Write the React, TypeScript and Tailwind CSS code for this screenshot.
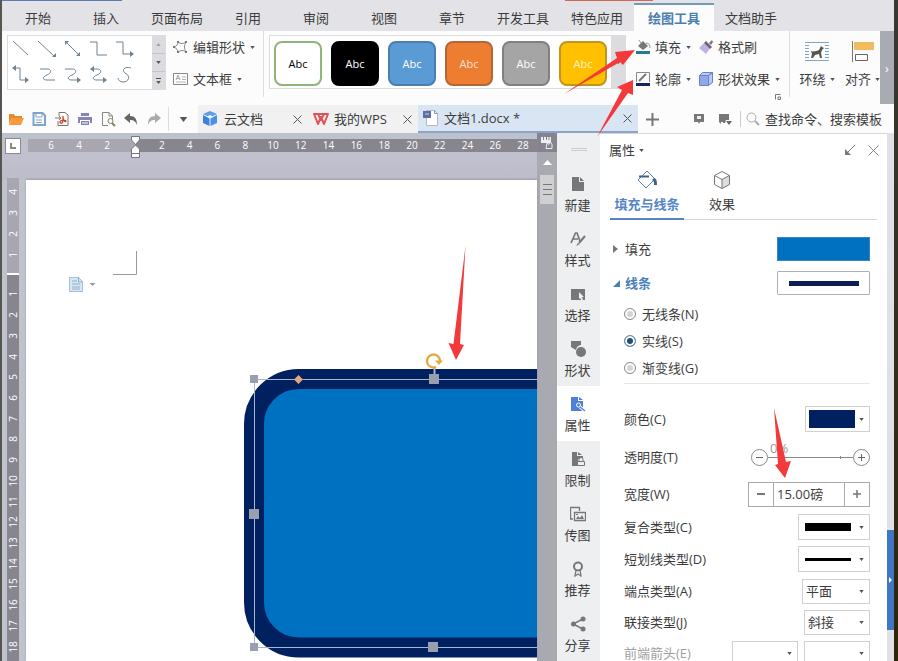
import clsx from "clsx";
import { useState } from "react";
import type { ReactNode } from "react";

const MENU = [
	"开始",
	"插入",
	"页面布局",
	"引用",
	"审阅",
	"视图",
	"章节",
	"开发工具",
	"特色应用",
	"绘图工具",
	"文档助手",
];

const SHAPE_STYLES = [
	{ id: "outline", className: "border-[#8fb57a] bg-white text-black" },
	{ id: "black", className: "border-black bg-black text-white" },
	{ id: "blue", className: "border-[#4a7db0] bg-[#5b9bd5] text-white" },
	{ id: "orange", className: "border-[#b5653a] bg-[#ed7d31] text-[#fbe3d3]" },
	{ id: "gray", className: "border-[#808080] bg-[#a5a5a5] text-white" },
	{ id: "gold", className: "border-[#bf9420] bg-[#ffc000] text-[#fff0c0]" },
];

const LINE_TYPES = ["无线条(N)", "实线(S)", "渐变线(G)"];

function Caret({ className }: { className?: string }) {
	return (
		<svg
			viewBox="0 0 6 4"
			className={clsx("h-[3px] w-[5px] shrink-0 fill-[#555]", className)}
		>
			<path d="M0 0h6L3 4z" />
		</svg>
	);
}

function Icon({
	children,
	className = "size-4",
	box = "0 0 16 16",
}: {
	children: ReactNode;
	className?: string;
	box?: string;
}) {
	return (
		<svg viewBox={box} fill="none" className={clsx("shrink-0", className)}>
			{children}
		</svg>
	);
}

function MenuBar() {
	const [active, setActive] = useState("绘图工具");

	return (
		<nav className="relative flex h-[31px] shrink-0 bg-[#e3e3e7] pl-0.5">
			<div className="absolute top-0 left-0 h-px w-[120px] bg-[#5b7fb5]" />
			<div className="absolute top-0 left-[563px] h-px w-[88px] bg-[#cf6a58]" />
			{MENU.map((item) => (
				<button
					key={item}
					type="button"
					onClick={() => setActive(item)}
					className={clsx(
						"shrink-0 text-center",
						item === active
							? "mt-[3px] w-20 border-t-2 border-[#6f9bb8] bg-[#fcfcfc] font-bold text-[#4a80b0]"
							: "mt-[5px]",
						item !== active && (item.length > 2 ? "w-[74px]" : "w-[68px]"),
					)}
				>
					{item}
				</button>
			))}
		</nav>
	);
}

function LineGallery() {
	return (
		<div className="flex h-[55px] w-[159px] shrink-0 border border-[#dcdcde] bg-white">
			<svg
				viewBox="8 36 144 53"
				className="h-[53px] w-36 shrink-0"
				fill="none"
				stroke="#6f8291"
			>
				<path d="M13 41 28 55" />
				<path d="M38 41 54 56" />
				<path d="M66 42 79 55" />
				<path d="M90 42h7v13h10" />
				<path d="M116 42h7v12h9" />
				<path d="M14 68h6v12h8" />
				<path d="M40 69h7c5 0 5 4 0 6s-5 5 0 5h8" />
				<path d="M65 69h7c5 0 5 4 0 6s-5 5 0 5h8" />
				<path d="M92 69h5c5 0 5 4 0 6s-5 5 0 5h9" />
				<path d="M131 68c-6-2-10 2-6 5 6 3 4 9-2 9-3 0-5-2-5-4" />
				<path
					d="M56 57v-4l-4 4zM65 41v4l4-4zM80 56v-4l-4 4zM134 54l-4-3v6zM12 68l4-3v6zM29 80l-4-3v6zM81 80l-4-3v6zM90 69l4-3v6zM107 80l-4-3v6z"
					fill="#6f8291"
					stroke="none"
				/>
			</svg>
			<div className="flex flex-1 flex-col bg-[#dcdce0]">
				<button
					type="button"
					aria-label="向上"
					className="flex flex-1 items-center justify-center border-b border-[#c5c5c9]"
				>
					<Caret className="rotate-180 opacity-40" />
				</button>
				<button
					type="button"
					aria-label="向下"
					className="flex flex-1 items-center justify-center border-b border-[#c5c5c9]"
				>
					<Caret />
				</button>
				<button
					type="button"
					aria-label="更多"
					className="flex flex-1 flex-col items-center justify-center gap-0.5"
				>
					<span className="h-px w-[5px] bg-[#555]" />
					<Caret />
				</button>
			</div>
		</div>
	);
}

function RibbonButton({
	icon,
	label,
	caret = true,
}: {
	icon: ReactNode;
	label: string;
	caret?: boolean;
}) {
	return (
		<button
			type="button"
			className="flex h-8 items-center gap-1 whitespace-nowrap"
		>
			{icon}
			{label}
			{caret && <Caret className="ml-px" />}
		</button>
	);
}

function Ribbon() {
	return (
		<div className="flex h-[73px] shrink-0 bg-[#fcfcfc]">
			<div className="flex min-w-0 flex-1 overflow-hidden pl-[5px]">
				<div className="pt-1">
					<LineGallery />
				</div>
				<div className="ml-[7px] flex w-[90px] shrink-0 flex-col">
					<RibbonButton
						label="编辑形状"
						icon={
							<Icon>
								<path
									d="M5 3c3 2 5 2 8 0-2 4-2 6 0 10-3-2-5-2-8 0 0-2-1-3-4-5 3-1 4-3 4-5z"
									stroke="#888"
								/>
								<path
									d="M4 2h2v2H4zM12 2h2v2h-2zM12 12h2v2h-2zM4 12h2v2H4zM0 7h2v2H0z"
									fill="#777"
								/>
							</Icon>
						}
					/>
					<RibbonButton
						label="文本框"
						icon={
							<Icon>
								<path d="M.5 2.500h14v11H.5z" stroke="#888" />
								<path d="m3 9 2-5 2 5M4 7.500h2" stroke="#a0a8b0" />
								<path d="M9 6h4M9 8.500h4M3 11h10" stroke="#b0b4b8" />
							</Icon>
						}
					/>
				</div>
				<div className="mr-[5px] h-[66px] w-px shrink-0 bg-[#dedee0]" />
				<div className="mt-1 flex h-[54px] shrink-0 border border-[#dcdcde]">
					<div className="flex gap-[9px] bg-white px-1 py-[5px]">
						{SHAPE_STYLES.map((style) => (
							<button
								key={style.id}
								type="button"
								className={clsx(
									"h-[45px] w-12 shrink-0 rounded-lg border-2 text-[11px]",
									style.className,
								)}
							>
								Abc
							</button>
						))}
					</div>
					<div className="flex w-[14px] items-center justify-center bg-[#dcdce0]">
						<Caret />
					</div>
				</div>
				<div className="ml-[9px] flex w-[63px] shrink-0 flex-col">
					<RibbonButton
						label="填充"
						icon={
							<Icon>
								<path d="M3 7 8 2l5 5-5 4z" fill="#777" />
								<path d="M6 4 4 1M11 4c3 0 4 2 4 5" stroke="#999" />
								<path d="M1 12h14v3H1z" fill="#217c94" />
							</Icon>
						}
					/>
					<RibbonButton
						label="轮廓"
						icon={
							<Icon>
								<path d="M1.500 11V1.500h13V11" stroke="#888" />
								<path d="m4 10 7-7" stroke="#777" strokeWidth="2" />
								<path d="M1 12h14v3H1z" fill="#14265c" />
							</Icon>
						}
					/>
				</div>
				<div className="relative flex w-[91px] shrink-0 flex-col">
					<RibbonButton
						label="格式刷"
						caret={false}
						icon={
							<Icon>
								<path d="m1 9 5-5 6 5-4 6z" fill="#c3b0e2" />
								<path d="m6 4 2-2 6 6-2 2z" fill="#6b6575" />
								<path d="m11 4 3-3 1 2-2 3z" fill="#777" />
							</Icon>
						}
					/>
					<RibbonButton
						label="形状效果"
						icon={
							<Icon>
								<path d="M1.500 4.500h9v10h-9z" fill="#8fa9e8" stroke="#6a82c4" />
								<path
									d="m1.500 4.500 3-3h10l-4 3zM10.500 4.500l4-3v10l-4 3z"
									fill="#b9c9f4"
									stroke="#6a82c4"
								/>
							</Icon>
						}
					/>
					<Icon className="absolute right-2 bottom-1 size-[6px]" box="0 0 6 6">
						<path d="M.5 5.500V.5h5M3 3h2.500v2.500H3z" stroke="#777" />
					</Icon>
				</div>
				<div className="mr-[9px] h-[66px] w-px shrink-0 bg-[#dedee0]" />
				<button
					type="button"
					className="flex w-9 shrink-0 flex-col items-center pt-2"
				>
					<Icon className="h-6 w-6" box="0 0 24 24">
						<path
							d="M0 3.500h24M0 6.500h4M20 6.500h4M0 9.500h4M20 9.500h4M0 12.500h4M20 12.500h4M0 15.500h4M20 15.500h4M0 18.500h4M20 18.500h4M0 21.500h24"
							stroke="#7fa6c4"
						/>
						<path
							d="M6 12c3 1 6 0 8-1l2-4 1 1 2 1-2 2-1 3 1 5h-2l-1-4-4 1-2 3H6l1-4z"
							fill="#555"
						/>
					</Icon>
					<span className="mt-1.5 flex items-center gap-1 whitespace-nowrap">
						环绕
						<Caret />
					</span>
				</button>
				<button
					type="button"
					className="ml-[10px] flex shrink-0 flex-col items-center pt-2"
				>
					<Icon className="h-6 w-6" box="0 0 24 24">
						<path d="M1.500 2v21" stroke="#777" />
						<path d="M3 3h20v8H3z" fill="#f2bb62" />
						<path d="M4.500 15.500h12v6h-12z" stroke="#666" />
					</Icon>
					<span className="mt-1.5 flex items-center gap-1 whitespace-nowrap">
						对齐
						<Caret />
					</span>
				</button>
			</div>
			<button
				type="button"
				aria-label="展开"
				className="w-[14px] shrink-0 bg-[#a9abb3] text-white"
			>
				›
			</button>
		</div>
	);
}

function CloseMark({ className = "size-[9px]" }: { className?: string }) {
	return (
		<Icon className={className} box="0 0 9 9">
			<path d="m.5.5 8 8m0-8-8 8" stroke="#555" />
		</Icon>
	);
}

function QuickAccess() {
	return (
		<div className="flex w-[196px] shrink-0 items-center pl-[6px]">
			<div className="flex items-center gap-[7px]">
				<button type="button" aria-label="打开">
					<Icon>
						<path d="M1 13V3h5l1 2h7v2H4z" fill="#e48a2e" />
						<path d="m1 14 3-7h12l-3 7z" fill="#f79a3b" />
					</Icon>
				</button>
				<button type="button" aria-label="保存">
					<Icon>
						<path
							d="M2.500 2h9L14 4.500V14H2.500z"
							stroke="#7fa3cc"
							strokeWidth="2"
						/>
						<path d="M5 3v3h6V3M5 9h6M5 11.500h6" stroke="#7fa3cc" />
					</Icon>
				</button>
				<button type="button" aria-label="输出为PDF">
					<Icon>
						<path d="M5 5V1.500h6L14 4v10.500H4V10" stroke="#80736b" />
						<path d="M1 7h6M5 5l2 2-2 2" stroke="#80736b" />
						<path
							d="M9 5v4c0 4-3 4-3 2s6-2 6-1-3 1-3-4"
							stroke="#c4472f"
							strokeWidth="1.300"
						/>
					</Icon>
				</button>
				<button type="button" aria-label="打印">
					<Icon>
						<path d="M4 2h8v3H4zM1 6h14v6h-2V9H3v3H1z" fill="#8684b5" />
						<path d="M4 10h8v4H4z" fill="#8684b5" />
						<path d="M5 12h6" stroke="#fff" />
					</Icon>
				</button>
				<button type="button" aria-label="打印预览">
					<Icon>
						<path
							d="M8 14.500H2.500v-13H9L12.500 5v3M9 1.500V5h3"
							stroke="#888"
						/>
						<circle cx="10.500" cy="10" r="2.500" stroke="#8a8060" />
						<path d="m12 12 3 3" stroke="#8a8060" strokeWidth="2" />
					</Icon>
				</button>
				<button type="button" aria-label="撤销">
					<Icon>
						<path d="m1 7 6-5v3c5 0 7 3 7 9-1-3-3-5-7-5v3z" fill="#666" />
					</Icon>
				</button>
				<button type="button" aria-label="恢复">
					<Icon>
						<path d="M15 7 9 2v3c-5 0-7 3-7 9 1-3 3-5 7-5v3z" fill="#aaa" />
					</Icon>
				</button>
			</div>
			<div className="mr-[10px] ml-[6px] h-6 w-px bg-[#ddd]" />
			<Caret className="h-[5px] w-[9px]" />
		</div>
	);
}

function TabBar() {
	const [query, setQuery] = useState("");

	return (
		<div className="flex h-[29px] shrink-0 bg-[#fcfcfc] pt-px">
			<QuickAccess />
			<div className="flex w-[110px] shrink-0 items-center bg-[#f1f1f2] pr-[6px] pl-1">
				<Icon>
					<path d="m8 0 7 3-7 3.500L1 3z" fill="#5b9cec" />
					<path d="m1 4 6.500 3.500V15L1 12z" fill="#3c82dc" />
					<path d="M15 4 8.500 7.500V15L15 12z" fill="#4a8fe6" />
					<path d="m8 4 3 1.500L8 7 5 5.500z" fill="#fff" />
				</Icon>
				<span className="ml-1.5 flex-1">云文档</span>
				<CloseMark />
			</div>
			<div className="flex w-[110px] shrink-0 items-center bg-[#f1f1f2] pr-[6px] pl-1">
				<Icon className="h-4 w-[18px]" box="0 0 18 16">
					<path
						d="M2 3h14l-4 10-3-7-3 7zM6 3l3 6 3-6"
						stroke="#e05257"
						strokeWidth="2"
						strokeLinejoin="round"
					/>
				</Icon>
				<span className="ml-1 flex-1">我的WPS</span>
				<CloseMark />
			</div>
			<div className="flex min-w-[150px] flex-1 items-center border-b-2 border-[#8aa4cb] bg-[#dae5f4] pr-[6px] pl-[5px]">
				<Icon className="h-[18px] w-4" box="0 0 16 18">
					<path d="M3.500 1.500h8l3 3v12h-11z" fill="#fff" stroke="#b3b9c6" />
					<path d="M11.500 1.500v3h3" stroke="#8793ad" />
					<path d="M0 2h8v7H0z" fill="#5e6fa8" />
					<path d="M2 5h4" stroke="#c4cce6" />
				</Icon>
				<span className="ml-[5px] flex-1">文档1.docx *</span>
				<CloseMark />
			</div>
			<div className="flex w-[256px] shrink-0 items-center pl-2">
				<button type="button" aria-label="新建标签">
					<Icon className="size-[13px]" box="0 0 13 13">
						<path d="M6.500 0v13M0 6.500h13" stroke="#777" strokeWidth="2" />
					</Icon>
				</button>
				<Icon className="ml-[34px] size-3" box="0 0 12 12">
					<path d="M1 1h10v8H7l-1 2-1-2H1z" fill="#777" />
					<path d="M4 3h4v3H4z" fill="#eee" />
				</Icon>
				<Icon className="ml-[13px] h-3 w-[14px]" box="0 0 14 12">
					<path d="M1 1h10v6H8l-1 3H5V9H3v2L1 9z" fill="#777" />
					<path d="M8 8h6l-3 4z" fill="#666" />
				</Icon>
				<div className="mr-[5px] ml-2 h-4 w-px bg-[#ccc]" />
				<Icon className="size-[14px]" box="0 0 14 14">
					<circle cx="5.500" cy="5.500" r="4.500" stroke="#aaa" />
					<path d="m9 9 4 4" stroke="#aaa" strokeWidth="2" />
				</Icon>
				<input
					type="text"
					aria-label="查找"
					value={query}
					onChange={(e) => setQuery(e.target.value)}
					placeholder="查找命令、搜索模板"
					className="ml-[5px] w-[122px] bg-transparent outline-none placeholder:text-[#3c3c3c]"
				/>
			</div>
		</div>
	);
}

function HorizontalRuler() {
	return (
		<div className="flex h-[47px] shrink-0 bg-gradient-to-b from-[#bcc2ca] via-[#c1c0ce] to-[#bdbdca] pl-[3px]">
			<div className="mt-[5px] flex size-4 shrink-0 items-center justify-center border border-[#8a8a94] bg-white">
				<div className="size-[6px] border-b-2 border-l-2 border-[#888]" />
			</div>
			<div className="relative mt-[6px] ml-[7px] flex h-[13px] flex-1 text-center text-[10px] leading-[13px] text-white">
				<div className="flex w-[107px] shrink-0 bg-[#a7a6b1] pl-[9px]">
					{[6, 4, 2].map((n) => (
						<span key={n} className="w-7">
							{n}
						</span>
					))}
				</div>
				<div className="flex flex-1 bg-[#87868f] pl-[13px]">
					{Array.from({ length: 14 }, (_, i) => (
						<span key={i} className="flex-1">
							{i * 2 + 2}
						</span>
					))}
				</div>
				<Icon
					className="absolute -top-[3px] left-[103px] h-[22px] w-[9px]"
					box="0 0 9 22"
				>
					<path
						d="M.5.500h8V4l-4 4.500L.5 4zM.5 21.500V13l4-4 4 4v8.500zM.5 17.500h8"
						fill="#fff"
						stroke="#77767f"
					/>
				</Icon>
			</div>
		</div>
	);
}

function VerticalRuler() {
	return (
		<div className="flex w-6 shrink-0 flex-col bg-[#bfc4cc] pl-[5px]">
			<div className="-mt-0.5 flex w-3 flex-1 flex-col items-center overflow-hidden bg-[#87868f] text-[10px] text-white">
				<div className="flex h-[97px] w-full shrink-0 flex-col border-b-2 border-white bg-[#a7a6b1] pt-[3px] pb-2">
					{[4, 3, 2, 1].map((n) => (
						<div key={n} className="flex flex-1 items-center justify-center">
							<span className="-rotate-90 leading-3">{n}</span>
						</div>
					))}
				</div>
				<div className="mt-[9px] flex h-[373px] w-full shrink-0 flex-col">
					{Array.from({ length: 18 }, (_, i) => (
						<div key={i} className="flex flex-1 items-center justify-center">
							<span className="-rotate-90 leading-3">{i + 1}</span>
						</div>
					))}
				</div>
			</div>
		</div>
	);
}

function Page() {
	return (
		<div className="relative min-w-0 flex-1 overflow-hidden bg-white shadow-[0_-1px_2px_#9a9aa5]">
			<svg
				viewBox="26 180 511 481"
				className="block h-[481px] w-[511px]"
				fill="none"
			>
				<path d="M136.500 251v23.500H113" stroke="#999" />
				<path d="M69.500 277.500h9l4 4v10h-13z" fill="#d8e5f2" stroke="#a6c0da" />
				<path
					d="M72 281h5M72 284h8M72 287h8M72 289h8M78.500 277v5h4"
					stroke="#8fb0d0"
				/>
				<path d="M89.500 283h6l-3 3z" fill="#999" />
				<rect
					x="254"
					y="379"
					width="360"
					height="268.500"
					rx="45"
					fill="#0070c0"
					stroke="#002060"
					strokeWidth="20"
				/>
				<path d="M540 379.500H254.500v268H540" stroke="#a9b6cf" />
				<path d="M434.500 368v7" stroke="#a9b6cf" strokeWidth="2" />
				<path
					d="M250 375h8v8h-8zM429 374h10v10h-10zM249 509h10v10h-10zM250 643h8v8h-8zM428 642h10v10h-10z"
					fill="#999fae"
				/>
				<path d="m298.500 375 4.500 4.500-4.500 4.500-4.500-4.500z" fill="#e5a57e" />
				<path
					d="M436 367a6.500 6.500 0 1 1 4-6"
					stroke="#e6a93c"
					strokeWidth="2.300"
				/>
				<path d="M435 360.500h8l-4 4.500z" fill="#e6a93c" />
			</svg>
		</div>
	);
}

function ScrollBar() {
	return (
		<div className="flex w-5 shrink-0 flex-col items-center bg-[#a9a9b2]">
			<div className="flex h-[19px] w-full items-center justify-center bg-[#85848e]">
				<Icon className="size-3" box="0 0 12 12">
					<path d="M0 0h10v6H0z" fill="#eee" />
					<path d="M2.500 0v3M5.500 0v3M8 0v3" stroke="#85848e" />
					<path
						d="M5 11.500h6v-4L9.500 5 8 7.500 6 6z"
						fill="#85848e"
						stroke="#eee"
					/>
				</Icon>
			</div>
			<Icon className="mt-2 h-[5px] w-[9px]" box="0 0 9 5">
				<path d="M4.500 0 9 5H0z" fill="#fff" />
			</Icon>
			<div className="mt-[10px] flex h-[29px] w-[14px] flex-col items-center justify-center gap-1 bg-[#d0d0d3]">
				<span className="h-px w-[9px] bg-[#777]" />
				<span className="h-px w-[9px] bg-[#777]" />
				<span className="h-px w-[9px] bg-[#777]" />
			</div>
		</div>
	);
}

const SIDE_ITEMS: { label: string; icon: ReactNode }[] = [
	{
		label: "新建",
		icon: (
			<>
				<path d="M2 1h7v5h5v9H2z" fill="currentColor" />
				<path d="M10 1v4h4z" fill="currentColor" />
			</>
		),
	},
	{
		label: "样式",
		icon: (
			<>
				<path
					d="M1 12 5.500 2H7l3 8M3 8h5"
					stroke="currentColor"
					strokeWidth="1.700"
				/>
				<path d="m15 5-6 7" stroke="currentColor" strokeWidth="2" />
				<path d="m6 15 2-3 2 1z" fill="currentColor" />
			</>
		),
	},
	{
		label: "选择",
		icon: (
			<>
				<path d="M1 3h14v11H1z" fill="currentColor" />
				<path d="m9 6 5 5h-2l1 3-1 1-2-3-1 1z" fill="#eeeff1" />
			</>
		),
	},
	{
		label: "形状",
		icon: (
			<>
				<path d="M1 0h10v4a6 6 0 0 0-5 5L1 6z" fill="currentColor" />
				<circle cx="11" cy="11" r="5" fill="currentColor" />
			</>
		),
	},
	{
		label: "属性",
		icon: (
			<>
				<path d="M1 1h7v4h5v10H1z" fill="currentColor" />
				<path d="M9 1v3h4z" fill="currentColor" />
				<circle cx="8.500" cy="9" r="2" stroke="#fff" />
				<path d="m10 11 5 4" stroke="#fff" strokeWidth="3" />
				<path d="m10 11 5 4" stroke="currentColor" strokeWidth="1.500" />
			</>
		),
	},
	{
		label: "限制",
		icon: (
			<>
				<path d="M2 1h5v4h6v3H8v7H2z" fill="currentColor" />
				<path d="M8 1v3h4z" fill="currentColor" />
				<path
					d="M7.500 10.500h7v4h-7zM9 10V8.500a2 2 0 0 1 4 0V10"
					fill="#eeeff1"
					stroke="currentColor"
				/>
			</>
		),
	},
	{
		label: "传图",
		icon: (
			<>
				<path
					d="M3 13H.5V1.500h9V5M4.500 6.500h11v8h-11z"
					stroke="currentColor"
					strokeWidth="1.300"
				/>
				<path d="m6 13 2-3 2 2 2-3 2 4zM6 8h2v1H6z" fill="currentColor" />
			</>
		),
	},
	{
		label: "推荐",
		icon: (
			<>
				<circle cx="8" cy="5.500" r="4" stroke="currentColor" strokeWidth="2" />
				<path
					d="m6 9-1 6 3-2 3 2-1-6"
					stroke="currentColor"
					strokeWidth="1.300"
				/>
			</>
		),
	},
	{
		label: "分享",
		icon: (
			<>
				<path d="M13 3 3 8l10 5" stroke="currentColor" strokeWidth="1.500" />
				<circle cx="13" cy="3" r="2.500" fill="currentColor" />
				<circle cx="3.500" cy="8" r="2.500" fill="currentColor" />
				<circle cx="13" cy="13" r="2.500" fill="currentColor" />
			</>
		),
	},
];

function SideBar() {
	const [active, setActive] = useState("属性");

	return (
		<aside className="flex w-[43px] shrink-0 flex-col bg-[#eeeff1]">
			<div className="flex h-[33px] shrink-0 flex-col items-center gap-px pt-[15px]">
				<span className="h-px w-4 bg-[#ccc]" />
				<span className="h-px w-4 bg-[#ccc]" />
			</div>
			{SIDE_ITEMS.map(({ label, icon }) => (
				<button
					key={label}
					type="button"
					onClick={() => setActive(label)}
					className={clsx(
						"flex h-[55px] shrink-0 flex-col items-center gap-[3px] pt-[10px] pr-0.5",
						label === active && "bg-white",
					)}
				>
					<Icon
						className={clsx(
							"size-4",
							label === active ? "text-[#4f80d8]" : "text-[#777]",
						)}
					>
						{icon}
					</Icon>
					{label}
				</button>
			))}
		</aside>
	);
}

function Row({
	label,
	htmlFor,
	className = "h-8",
	children,
}: {
	label: string;
	htmlFor: string;
	className?: string;
	children: ReactNode;
}) {
	return (
		<div className={clsx("flex shrink-0 items-center", className)}>
			<label htmlFor={htmlFor} className="flex-1 whitespace-nowrap">
				{label}
			</label>
			{children}
		</div>
	);
}

function Picker({
	id,
	className,
	children,
}: {
	id: string;
	className: string;
	children: ReactNode;
}) {
	return (
		<button
			id={id}
			type="button"
			aria-haspopup="listbox"
			className={clsx(
				"flex h-[26px] items-center justify-between border border-[#d0d0d3] bg-white pr-[5px]",
				className,
			)}
		>
			{children}
			<Caret />
		</button>
	);
}

function Select({
	id,
	label,
	options,
	className,
}: {
	id: string;
	label?: string;
	options: string[];
	className: string;
}) {
	return (
		<div className={clsx("relative", className)}>
			<select
				id={id}
				aria-label={label}
				className="block h-[25px] w-full appearance-none border border-[#d0d0d3] bg-white pl-[3px]"
			>
				{options.map((option) => (
					<option key={option}>{option}</option>
				))}
			</select>
			<Caret className="pointer-events-none absolute top-[11px] right-[6px]" />
		</div>
	);
}

function LineSettings() {
	const [lineType, setLineType] = useState("实线(S)");
	const [opacity, setOpacity] = useState(0);
	const [width, setWidth] = useState(15);

	return (
		<div className="flex flex-col pr-[17px] pl-6">
			<fieldset className="border-b border-[#e6e6e8] pb-[2px]">
				{LINE_TYPES.map((type) => (
					<label key={type} className="flex h-[27px] items-center gap-[6px]">
						<input
							type="radio"
							name="lineType"
							checked={lineType === type}
							onChange={() => setLineType(type)}
							className="size-3 appearance-none rounded-full border border-[#8e8e92] bg-[#d4d4d8] shadow-[inset_0_0_0_2px_#fff] checked:border-[#6f8fa8] checked:bg-[#1d5078]"
						/>
						{type}
					</label>
				))}
			</fieldset>
			<Row label="颜色(C)" htmlFor="color" className="mt-4 h-[38px]">
				<Picker id="color" className="w-[65px] pl-[3px]">
					<span className="h-[18px] w-[46px] bg-[#002060]" />
				</Picker>
			</Row>
			<Row label="透明度(T)" htmlFor="opacity" className="h-[38px]">
				<div className="flex items-center">
					<button
						type="button"
						aria-label="减少透明度"
						onClick={() => setOpacity(Math.max(0, opacity - 1))}
					>
						<Icon className="size-[17px]" box="0 0 17 17">
							<circle cx="8.500" cy="8.500" r="8" stroke="#888" />
							<path d="M5 8.500h7" stroke="#666" />
						</Icon>
					</button>
					<div className="relative flex w-[85px] items-center">
						<output
							htmlFor="opacity"
							className="absolute bottom-0 left-0.5 text-[#999]"
						>
							{opacity}%
						</output>
						<input
							id="opacity"
							type="range"
							value={opacity}
							onChange={(e) => setOpacity(Number(e.target.value))}
							className="h-px w-full appearance-none bg-[#888] [&::-webkit-slider-thumb]:h-0 [&::-webkit-slider-thumb]:w-0 [&::-webkit-slider-thumb]:appearance-none"
						/>
						<span className="absolute right-3 h-[3px] w-px bg-[#888]" />
					</div>
					<button
						type="button"
						aria-label="增加透明度"
						onClick={() => setOpacity(Math.min(100, opacity + 1))}
					>
						<Icon className="size-[17px]" box="0 0 17 17">
							<circle cx="8.500" cy="8.500" r="8" stroke="#888" />
							<path d="M5 8.500h7M8.500 5v7" stroke="#666" />
						</Icon>
					</button>
				</div>
			</Row>
			<Row label="宽度(W)" htmlFor="width" className="h-[36px]">
				<div className="flex h-[25px] w-[122px] border border-[#a9a9ad]">
					<button
						type="button"
						aria-label="减小宽度"
						onClick={() => setWidth(Math.max(0, width - 1))}
						className="flex w-6 shrink-0 items-center justify-center"
					>
						<span className="h-0.5 w-2 bg-[#777]" />
					</button>
					<input
						id="width"
						type="text"
						readOnly
						value={`${width.toFixed(2)}磅`}
						className="min-w-0 flex-1 border-x border-[#a9a9ad] pl-[3px] outline-none"
					/>
					<button
						type="button"
						aria-label="增大宽度"
						onClick={() => setWidth(width + 1)}
						className="flex w-6 shrink-0 items-center justify-center"
					>
						<Icon className="size-2" box="0 0 8 8">
							<path d="M4 0v8M0 4h8" stroke="#777" strokeWidth="1.500" />
						</Icon>
					</button>
				</div>
			</Row>
			<Row label="复合类型(C)" htmlFor="compound" className="h-[30px]">
				<Picker id="compound" className="w-[72px] pl-[6px]">
					<span className="h-2 w-[46px] bg-black" />
				</Picker>
			</Row>
			<Row label="短划线类型(D)" htmlFor="dash" className="h-[34px]">
				<Picker id="dash" className="w-[72px] pl-[6px]">
					<span className="h-[3px] w-[46px] bg-black" />
				</Picker>
			</Row>
			<Row label="端点类型(A)" htmlFor="cap" className="h-[30px]">
				<Select
					id="cap"
					options={["平面", "正方形", "圆形"]}
					className="w-[68px]"
				/>
			</Row>
			<Row label="联接类型(J)" htmlFor="join">
				<Select
					id="join"
					options={["斜接", "圆形", "棱台"]}
					className="w-[66px]"
				/>
			</Row>
			<Row label="前端箭头(E)" htmlFor="arrow" className="h-[30px] text-[#a0a0a3]">
				<Select id="arrow" options={[""]} className="mr-[6px] w-[66px]" />
				<Select
					id="arrowSize"
					label="箭头大小"
					options={[""]}
					className="w-[66px]"
				/>
			</Row>
		</div>
	);
}

function PropertiesPanel() {
	return (
		<section className="flex w-[287px] shrink-0 flex-col border-t border-[#d8d8dc] bg-white">
			<header className="flex h-8 shrink-0 items-center pr-2 pl-[9px]">
				<h2>属性</h2>
				<Caret className="ml-1" />
				<button type="button" aria-label="收起" className="ml-auto">
					<Icon className="size-[10px]" box="0 0 10 10">
						<path d="m10 0-9 9" stroke="#777" />
						<path d="M0 4v6h6z" fill="#777" />
					</Icon>
				</button>
				<button type="button" aria-label="关闭" className="ml-[13px]">
					<Icon className="size-[11px]" box="0 0 11 11">
						<path d="m.5.5 10 10m0-10-10 10" stroke="#888" />
					</Icon>
				</button>
			</header>
			<div className="mr-[10px] ml-[10px] flex h-[54px] shrink-0 border-b border-[#d4d4d8]">
				<button
					type="button"
					className="-mb-px flex w-[74px] flex-col items-center border-b-2 border-[#5583c3] pt-1 font-bold text-[#5486c4]"
				>
					<Icon className="h-5 w-5" box="0 0 20 20">
						<path d="m10 1 8 8-9 9-8-8z" stroke="#5c7fa3" />
						<path d="M2 6.500h10" stroke="#3f6388" strokeWidth="2" />
						<path d="M17 8c3 1 3 4 3 7h-3c0-3 0-4-2-5z" fill="#3f6388" />
					</Icon>
					<span className="mt-1 leading-5">填充与线条</span>
				</button>
				<button
					type="button"
					className="flex w-[76px] flex-col items-center pt-1"
				>
					<Icon className="h-5 w-5" box="0 0 20 20">
						<path d="M10 9.500v9l7.500-4v-9z" fill="#ddd" />
						<path
							d="m10 1.500 7.500 4v9l-7.500 4-7.500-4v-9zM2.500 5.500l7.500 4 7.500-4M10 9.500v9"
							stroke="#777"
						/>
					</Icon>
					<span className="mt-1 leading-5">效果</span>
				</button>
			</div>
			<div className="mt-[11px] flex shrink-0 flex-col pr-[17px] pl-[13px]">
				<div className="flex h-[35px] items-center">
					<button type="button" className="flex items-center gap-[7px]">
						<Icon className="h-2 w-[5px]" box="0 0 5 8">
							<path d="M0 0v8l5-4z" fill="#777" />
						</Icon>
						填充
					</button>
					<div className="ml-auto h-6 w-[93px] border border-[#3c84bd] bg-[#0070c0]" />
				</div>
				<div className="flex h-[34px] items-center">
					<button
						type="button"
						className="flex items-center gap-[5px] font-bold text-[#4a80b8]"
					>
						<Icon className="size-[7px]" box="0 0 7 7">
							<path d="M7 0v7H0z" fill="#4a80b8" />
						</Icon>
						线条
					</button>
					<div className="ml-auto flex h-6 w-[93px] items-center justify-center rounded-[1px] border border-[#b0b0b4]">
						<span className="h-[5px] w-[70px] bg-[#0b1f55]" />
					</div>
				</div>
			</div>
			<LineSettings />
		</section>
	);
}

function Arrows() {
	return (
		<svg
			viewBox="0 0 898 661"
			className="pointer-events-none absolute top-0 left-0 h-[661px] w-[898px]"
			fill="#f4393b"
		>
			<path d="m564 94 53-36-2-6 20-2-12 15-3-3z" />
			<path d="m597 137 25-47-5-3 16-7v15l-5-2z" />
			<path d="m465.500 246-12 98-5-1 7.500 17 8-15-4-1z" />
			<path d="m774 408 4 56-3 1 10 13 6-17-5 1z" />
		</svg>
	);
}

export default function App() {
	return (
		<div className="relative flex h-screen overflow-hidden bg-[#fcfcfc] font-['Open_Sans','Noto_Sans_CJK_SC',sans-serif] text-[13px] leading-5 text-[#3c3c3c]">
			<div className="w-0.5 shrink-0 bg-[#56554f]" />
			<div className="flex min-w-0 flex-1 flex-col">
				<MenuBar />
				<Ribbon />
				<TabBar />
				<main className="flex min-h-0 flex-1">
					<div className="flex min-w-0 flex-1 flex-col">
						<HorizontalRuler />
						<div className="flex min-h-0 flex-1">
							<VerticalRuler />
							<Page />
						</div>
					</div>
					<ScrollBar />
					<SideBar />
					<PropertiesPanel />
					<div className="flex w-[7px] shrink-0 flex-col justify-end bg-[#e0e0e7] pb-[31px]">
						<button
							type="button"
							aria-label="展开窗格"
							className="flex h-[100px] items-center justify-center bg-[#3f76c6]"
						>
							<Icon className="h-[6px] w-[3px]" box="0 0 3 6">
								<path d="M0 0v6l3-3z" fill="#fff" />
							</Icon>
						</button>
					</div>
				</main>
			</div>
			<div className="w-1 shrink-0 bg-gradient-to-b from-[#3a3833] to-[#2e2408]" />
			<Arrows />
		</div>
	);
}
